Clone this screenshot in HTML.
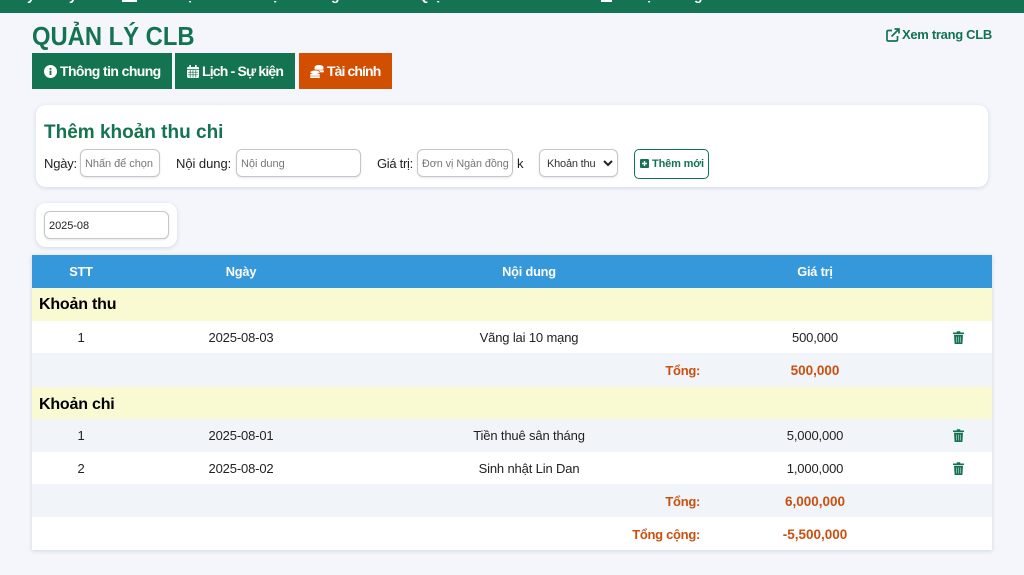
<!DOCTYPE html>
<html lang="vi"><head><meta charset="utf-8"><title>Quản lý CLB</title>
<style>
*{box-sizing:border-box}
html,body{margin:0;padding:0}
body{width:1024px;height:575px;overflow:hidden;position:relative;background:#f4f6fb;font-family:"Liberation Sans","Noto Sans CJK SC",sans-serif;color:#212529}
.a{position:absolute;white-space:nowrap}
.nav{left:0;top:0;width:1024px;height:13px;background:#147350;overflow:hidden}
.f{position:absolute;top:-13px;font-size:14px;line-height:16px;color:#fff;font-weight:700}
.btn{top:53px;height:36px;background:#147350;color:#fff;font-weight:700;font-size:14px;line-height:36px;letter-spacing:-.6px}
.card{background:#fff;border-radius:10px;box-shadow:0 1px 4px rgba(60,80,120,.18)}
.inp{background:#fff;border:1px solid #c4c6ca;border-radius:6px;font-size:11px;color:#777;line-height:28px;padding-left:4px;overflow:hidden;box-shadow:0 1px 2px rgba(0,0,0,.1);letter-spacing:-.05px}
.lb{font-size:13px;color:#222;line-height:18px;top:155px;letter-spacing:-.05px}
.row{left:32px;width:960px}
.c{position:absolute;text-align:center;white-space:nowrap;transform:translateX(-50%);font-size:13px;line-height:18px;color:#222;letter-spacing:-.15px}
.b{font-weight:700;color:#c9500f;font-size:13.5px;letter-spacing:0}
.r{position:absolute;right:324px;text-align:right;white-space:nowrap;font-weight:700;color:#c9500f;font-size:13px;line-height:18px;letter-spacing:-.3px}
.h{color:#fff;font-weight:700;font-size:12.800px;letter-spacing:-.2px}
.sec{position:absolute;left:39px;font-weight:700;font-size:16px;line-height:20px;color:#000;letter-spacing:-.2px}
svg{display:block}
.ic{position:absolute}
</style></head><body>
<div class="a nav">
<span class="f" style="left:27px">y</span><span class="f" style="left:69px">y</span>
<div style="position:absolute;left:122px;top:0;width:15px;height:2px;background:#fff"></div>
<span class="f" style="left:186px">ệ</span><span class="f" style="left:271px">ự</span><span class="f" style="left:331px">g</span>
<span class="f" style="left:418px">Q</span><span class="f" style="left:434px">ụ</span><span class="f" style="left:512px">ii</span>
<div style="position:absolute;left:601px;top:0;width:11px;height:2px;background:#fff"></div>
<span class="f" style="left:645px">ệ</span><span class="f" style="left:694px">g</span>
</div>

<div class="a" style="left:32px;top:20px;font-size:26px;line-height:33px;font-weight:700;color:#147350;transform:scaleX(.915);transform-origin:left">QUẢN LÝ CLB</div>

<svg class="ic" style="left:886px;top:28px" width="14" height="14" viewBox="0 0 14 14" fill="none" stroke="#147350" stroke-width="1.7"><path d="M6 2.5H2.2Q1 2.5 1 3.7V11.8Q1 13 2.2 13H10.3Q11.500 13 11.500 11.800V8"/><path d="M5.500 8.500L12.500 1.500M8.500 1H13V5.500"/></svg>
<div class="a" style="left:902px;top:26px;font-size:13px;line-height:18px;font-weight:700;color:#147350;letter-spacing:-.3px">Xem trang CLB</div>

<div class="a btn" style="left:32px;width:140px;padding-left:28px">Thông tin chung</div>
<svg class="ic" style="left:44px;top:65px" width="13" height="13" viewBox="0 0 13 13"><circle cx="6.500" cy="6.500" r="6.500" fill="#fff"/><rect x="5.600" y="5.500" width="1.800" height="4.500" fill="#147350"/><rect x="5.600" y="3" width="1.800" height="1.700" fill="#147350"/></svg>
<div class="a btn" style="left:175px;width:120px;padding-left:27px;letter-spacing:-.82px">Lịch - Sự kiện</div>
<svg class="ic" style="left:187px;top:65px" width="12" height="13" viewBox="0 0 12 13"><rect x="0" y="2" width="12" height="11" rx="1.200" fill="#fff"/><rect x="2.300" y="0" width="1.600" height="3" fill="#fff"/><rect x="8.100" y="0" width="1.600" height="3" fill="#fff"/><path d="M0 4.600H12M1 7.200H11M1 9.800H11M3.200 5V12.500M6 5V12.500M8.800 5V12.500" stroke="#147350" stroke-width=".7"/></svg>
<div class="a btn" style="left:299px;width:93px;background:#d24e00;padding-left:28px;letter-spacing:-.9px">Tài chính</div>
<svg class="ic" style="left:310px;top:65px" width="14" height="13" viewBox="0 0 14 13" fill="#fff"><ellipse cx="9" cy="2.200" rx="4.500" ry="2.200"/><rect x="4.500" y="2.500" width="9" height="2.200" rx="1"/><rect x="5" y="5.200" width="9" height="2.200" rx="1"/><ellipse cx="5" cy="7.300" rx="5" ry="2.100" stroke="#d24e00" stroke-width=".6"/><rect x="0" y="9" width="10" height="1.800" rx=".9"/><rect x="0" y="11.200" width="10" height="1.800" rx=".9"/></svg>

<div class="a card" style="left:36px;top:105px;width:952px;height:82px"></div>
<div class="a" style="left:44px;top:121px;font-size:19px;line-height:23px;font-weight:700;color:#147350">Thêm khoản thu chi</div>
<div class="a lb" style="left:44px;letter-spacing:-.2px">Ngày:</div>
<div class="a inp" style="left:80px;top:149px;width:80px;height:28px">Nhấn để chọn</div>
<div class="a lb" style="left:176px">Nội dung:</div>
<div class="a inp" style="left:236px;top:149px;width:125px;height:28px">Nội dung</div>
<div class="a lb" style="left:377px;letter-spacing:-.3px">Giá trị:</div>
<div class="a inp" style="left:417px;top:149px;width:96px;height:28px;font-size:10.800px">Đơn vị Ngàn đồng</div>
<div class="a lb" style="left:517px">k</div>
<div class="a inp" style="left:539px;top:149px;width:79px;height:28px;padding-left:7px;color:#333;letter-spacing:-.2px">Khoản thu</div>
<svg class="ic" style="left:603px;top:160px" width="10" height="7" viewBox="0 0 10 7" fill="none" stroke="#222" stroke-width="2"><path d="M1 1L5 5L9 1"/></svg>
<div class="a" style="left:634px;top:149px;width:75px;height:30px;border:1px solid #147350;border-radius:5px;background:#fff"></div>
<svg class="ic" style="left:640px;top:159px" width="9" height="9" viewBox="0 0 9 9"><rect width="9" height="9" rx="1.300" fill="#147350"/><path d="M4.500 2V7M2 4.500H7" stroke="#fff" stroke-width="1.400"/></svg>
<div class="a" style="left:652px;top:155px;font-size:11px;line-height:18px;font-weight:700;color:#147350;letter-spacing:-.15px">Thêm mới</div>

<div class="a card" style="left:36px;top:203px;width:141px;height:44px"></div>
<div class="a inp" style="left:44px;top:211px;width:125px;height:28px;color:#222;font-size:11px">2025-08</div>

<div class="a" style="left:32px;top:255px;width:960px;height:295px;background:#fff;box-shadow:0 1px 4px rgba(60,80,120,.2)"></div>
<div class="a row" style="top:255px;height:33px;background:#3498db"></div>
<div class="a row" style="top:288px;height:33px;background:#fafad2"></div>
<div class="a row" style="top:353px;height:34px;background:#f1f4f9"></div>
<div class="a row" style="top:387px;height:32px;background:#fafad2"></div>
<div class="a row" style="top:419px;height:33px;background:#f1f4f9"></div>
<div class="a row" style="top:484px;height:33px;background:#f1f4f9"></div>

<div class="c h" style="left:81px;top:263px">STT</div>
<div class="c h" style="left:241px;top:263px">Ngày</div>
<div class="c h" style="left:529px;top:263px">Nội dung</div>
<div class="c h" style="left:815px;top:263px">Giá trị</div>

<div class="sec" style="top:295px">Khoản thu</div>
<div class="c" style="left:81px;top:329px">1</div>
<div class="c" style="left:241px;top:329px">2025-08-03</div>
<div class="c" style="left:529px;top:329px">Vãng lai 10 mạng</div>
<div class="c" style="left:815px;top:329px">500,000</div>
<svg class="ic" style="left:952.500px;top:331px" width="11" height="13" viewBox="0 0 11 13"><path d="M0 1.500H3.500L4 .3H7L7.500 1.500H11V3H0ZM1 3.800H10L9.400 13H1.600Z" fill="#147350"/><path d="M3.500 5.500V11.500M5.500 5.500V11.500M7.500 5.500V11.500" stroke="#9fc7b8" stroke-width=".8"/></svg>

<div class="r" style="top:362px">Tổng:</div>
<div class="c b" style="left:815px;top:362px">500,000</div>

<div class="sec" style="top:395px">Khoản chi</div>
<div class="c" style="left:81px;top:427px">1</div>
<div class="c" style="left:241px;top:427px">2025-08-01</div>
<div class="c" style="left:529px;top:427px">Tiền thuê sân tháng</div>
<div class="c" style="left:815px;top:427px">5,000,000</div>
<svg class="ic" style="left:952.500px;top:429px" width="11" height="13" viewBox="0 0 11 13"><path d="M0 1.500H3.500L4 .3H7L7.500 1.500H11V3H0ZM1 3.800H10L9.400 13H1.600Z" fill="#147350"/><path d="M3.500 5.500V11.500M5.500 5.500V11.500M7.500 5.500V11.500" stroke="#9fc7b8" stroke-width=".8"/></svg>

<div class="c" style="left:81px;top:460px">2</div>
<div class="c" style="left:241px;top:460px">2025-08-02</div>
<div class="c" style="left:529px;top:460px">Sinh nhật Lin Dan</div>
<div class="c" style="left:815px;top:460px">1,000,000</div>
<svg class="ic" style="left:952.500px;top:462px" width="11" height="13" viewBox="0 0 11 13"><path d="M0 1.500H3.500L4 .3H7L7.500 1.500H11V3H0ZM1 3.800H10L9.400 13H1.600Z" fill="#147350"/><path d="M3.500 5.500V11.500M5.500 5.500V11.500M7.500 5.500V11.500" stroke="#9fc7b8" stroke-width=".8"/></svg>

<div class="r" style="top:493px">Tổng:</div>
<div class="c b" style="left:815px;top:493px">6,000,000</div>
<div class="r" style="top:526px">Tổng cộng:</div>
<div class="c b" style="left:815px;top:526px">-5,500,000</div>
</body></html>
